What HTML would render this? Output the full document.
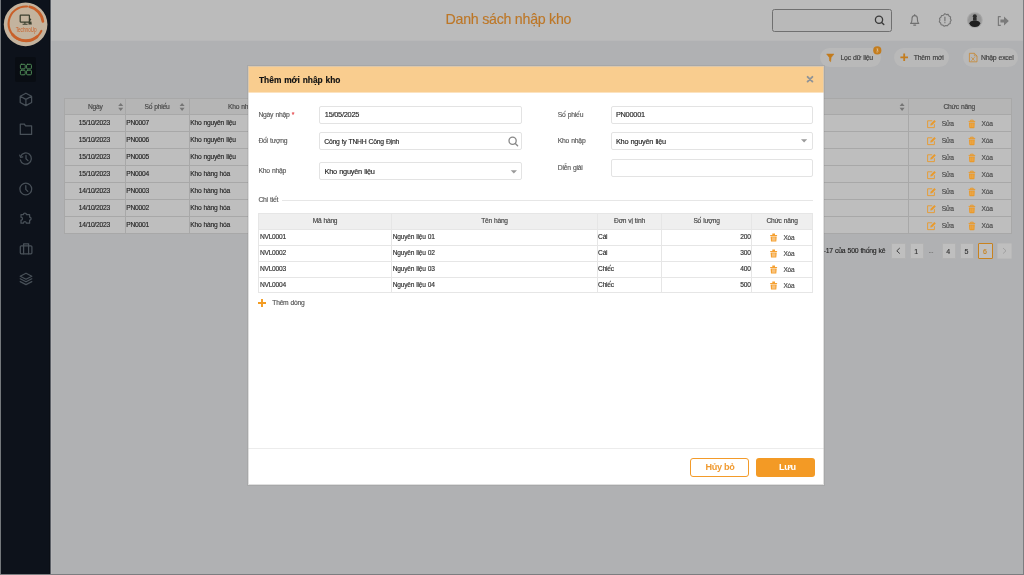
<!DOCTYPE html>
<html><head><meta charset="utf-8">
<style>
*{box-sizing:border-box;margin:0;padding:0}
html,body{width:1024px;height:575px;overflow:hidden;background:#b0b1b3;font-family:"Liberation Sans",sans-serif;color:#222}
#wrap{position:absolute;left:0;top:0;width:1024px;height:575px;overflow:hidden;background:#b0b1b3;will-change:transform}
.a{position:absolute}
.t{position:absolute;white-space:nowrap;line-height:1;-webkit-text-stroke:0.15px currentColor;word-spacing:0.5px}
svg{position:absolute;overflow:visible}
</style></head><body><div id="wrap">

<div class="a" style="left:1px;top:0px;width:49px;height:575px;background:#0d121b;"></div>
<div class="a" style="left:49px;top:0px;width:1px;height:575px;background:#0a0e15;"></div>
<div class="a" style="left:50px;top:0px;width:1px;height:575px;background:#5b5f66;"></div>
<div class="a" style="left:51px;top:0px;width:973px;height:40px;background:#bbbbbb;"></div>
<div class="a" style="left:51px;top:40px;width:973px;height:1px;background:#b8b8b9;"></div>
<div class="a" style="left:51px;top:0px;width:1px;height:575px;background:#c2c2c2;opacity:.3"></div>
<svg style="left:0;top:0" width="52" height="50" viewBox="0 0 52 50">
  <circle cx="25.6" cy="24.4" r="21.8" fill="#c3b39e"/>
  <g fill="none" stroke="#c8602a" stroke-linecap="round">
  <path d="M27 6.5 A17.2 17.2 0 1 0 41.4 30.9" stroke-width="2.1"/>
  <path d="M36.9 36.8 A17.5 17.5 0 0 1 12.6 34.6" stroke-width="2.9"/>
  <path d="M29.6 6.8 A17.2 17.2 0 0 1 42.9 21.4" stroke-width="2.7"/>
  </g>
  <rect x="20.2" y="15.2" width="9.2" height="6.8" rx="0.5" fill="none" stroke="#3b3f2f" stroke-width="1.25"/>
  <path d="M22.6 24.2 h5 M24.9 22 v2.2" stroke="#3b3f2f" stroke-width="1.1"/>
  <circle cx="30.1" cy="19.6" r="1.15" fill="#3b3f2f"/>
  <path d="M28.4 24.6 L28.8 21.6 H31.4 L31.8 24.6Z" fill="#3b3f2f"/>
  <text x="26.2" y="31.6" font-family="Liberation Sans" font-size="6.4" fill="#c8602a" text-anchor="middle" textLength="21" lengthAdjust="spacingAndGlyphs">TechnoUp</text>
</svg>
<div class="a" style="left:15px;top:57px;width:21px;height:25px;background:#090d13;border-radius:2px"></div>
<svg style="left:0;top:0" width="52" height="300" viewBox="0 0 52 300" fill="none" stroke-width="1" stroke-linecap="round" stroke-linejoin="round">
  <g stroke="#4f8b57">
    <rect x="20.4" y="64.3" width="4.8" height="4.6" rx="1"/>
    <rect x="26.6" y="64.3" width="4.8" height="4.6" rx="1"/>
    <rect x="20.4" y="70.2" width="4.8" height="4.6" rx="1"/>
    <rect x="26.6" y="70.2" width="4.8" height="4.6" rx="1"/>
  </g>
  <g stroke="#485058" stroke-width="1.25">
    <path d="M25.9 93.2 L31.6 96.3 V102.5 L25.9 105.6 L20.2 102.5 V96.3 Z M20.2 96.3 L25.9 99.4 L31.6 96.3 M25.9 99.4 V105.6"/>
    <path d="M20.3 124 H24.2 L25.6 125.8 H31.6 V134.4 H20.3 Z"/>
    <path d="M20.6 156.4 A5.6 5.6 0 1 1 20.3 159.8"/>
    <path d="M19.8 155.2 L20.6 157.4 L22.8 156.8"/>
    <path d="M26 155.4 V158.8 L28 160.6"/>
    <circle cx="25.8" cy="189" r="5.9"/>
    <path d="M25.8 185.6 V189.4 L27.8 191.4"/>
    <path d="M21 214.6 H23.4 A1.5 1.5 0 0 1 26.4 214.6 H29.6 V217.2 A1.5 1.5 0 0 1 29.6 220.2 V223.2 H26.4 A1.5 1.5 0 0 0 23.4 223.2 H21 V220.2 A1.5 1.5 0 0 0 21 217.2 Z"/>
    <rect x="20.3" y="245.8" width="11.6" height="8" rx="1"/>
    <path d="M23.6 245.8 V243.8 H28.6 V245.8 M23.6 245.8 V253.8 M28.6 245.8 V253.8"/>
    <path d="M26 273.2 L31.8 276.2 L26 279.2 L20.2 276.2 Z"/>
    <path d="M20.2 278.8 L26 281.8 L31.8 278.8"/>
    <path d="M20.2 281.6 L26 284.6 L31.8 281.6"/>
  </g>
</svg>
<div class="t " style="left:445.6px;top:12px;font-size:14.20px;letter-spacing:-0.035em;color:#bd7727;letter-spacing:-0.25px;word-spacing:0">Danh sách nhập kho</div>
<div class="a" style="left:772px;top:9px;width:120px;height:23px;background:#b9b9b9;border:1px solid #707070;border-radius:2.5px"></div>
<svg style="left:0;top:0" width="1024" height="41" viewBox="0 0 1024 41" fill="none">
  <circle cx="879" cy="19.8" r="3.6" stroke="#3a3a3a" stroke-width="1.3"/>
  <path d="M881.6 22.4 L883.8 24.6" stroke="#3a3a3a" stroke-width="1.4" stroke-linecap="round"/>
  <path d="M910.6 23.4 Q912 22.2 912 19.6 V18.6 A2.7 3 0 0 1 917.4 18.6 V19.6 Q917.4 22.2 918.8 23.4 Z" stroke="#707070" stroke-width="1.1" stroke-linejoin="round"/>
  <path d="M914.7 14.5 V15.5 M913.7 25.1 H915.7" stroke="#707070" stroke-width="1.1" stroke-linecap="round"/>
  <path d="M944.9 13.6 L946.4 14.6 L948.2 14.4 L949 16 L950.6 16.9 L950.4 18.7 L951.2 20.2 L950.2 21.7 L950.2 23.5 L948.5 24.2 L947.5 25.7 L945.7 25.5 L944.2 26.3 L942.9 25.1 L941.1 24.7 L940.6 23 L939.3 21.8 L939.9 20.1 L939.5 18.4 L940.9 17.3 L941.5 15.6 L943.3 15.3 Z" stroke="#747474" stroke-width="1.1" stroke-linejoin="round"/>
  <path d="M944.9 17 V20.8" stroke="#747474" stroke-width="1.2" stroke-linecap="round"/>
  <circle cx="944.9" cy="22.7" r="0.65" fill="#747474"/>
  <circle cx="974.8" cy="20.1" r="7.9" fill="#a6a6a6"/>
  <circle cx="974.8" cy="20.1" r="6.8" fill="#979797"/>
  <path d="M969.4 23.2 Q970.2 20.6 974.8 20.6 Q979.4 20.6 980.2 23.2 Q979.6 26.8 974.8 27 Q970 26.8 969.4 23.2Z" fill="#1e1e1e"/>
  <circle cx="974.8" cy="16.2" r="2" fill="#2c2c2c"/>
  <path d="M973 17.6 h3.6 v3 h-3.6z" fill="#2c2c2c"/>
  <path d="M1000.8 16.6 H998.4 V25.4 H1000.8" stroke="#7a7a7a" stroke-width="1.2" stroke-linejoin="round"/>
  <path d="M1000.4 19.4 H1004 V16.6 L1008.8 21 L1004 25.4 V22.6 H1000.4 Z" fill="#7a7a7a"/>
</svg>
<div class="a" style="left:819.5px;top:48px;width:61px;height:19px;background:#b9b9b9;border-radius:10px"></div>
<div class="a" style="left:894px;top:48px;width:55px;height:19px;background:#b9b9b9;border-radius:10px"></div>
<div class="a" style="left:963px;top:48px;width:55px;height:19px;background:#b9b9b9;border-radius:10px"></div>
<svg style="left:0;top:0" width="1024" height="70" viewBox="0 0 1024 70" fill="none">
  <path d="M826.6 54 H834 L831.2 57.4 L830.6 61.8 L829.6 61 L829.3 57.4 Z" fill="#c27b1c" stroke="#c27b1c" stroke-width="0.5" stroke-linejoin="round"/>
  <circle cx="877.3" cy="50.4" r="4.1" fill="#c47d1e"/>
  <path d="M876.4 48.9 H878.1 L877 50.3 Q878.4 50.4 878.2 51.4 Q877.9 52.3 876.3 51.9" stroke="#e8d6bd" stroke-width="0.6" fill="none"/>
  <path d="M900.4 57.3 H908 M904.2 53.5 V61.1" stroke="#c47d1e" stroke-width="1.8"/>
  <path d="M969.4 53.3 H974.4 L977 55.9 V61.8 H969.4 Z" stroke="#c8862e" stroke-width="0.8"/>
  <path d="M974.4 53.3 V55.9 H977" stroke="#c8862e" stroke-width="0.6"/>
  <path d="M971.4 57.2 L974.6 60.8 M974.6 57.2 L971.4 60.8" stroke="#c8862e" stroke-width="0.7"/>
</svg>
<div class="t " style="left:840.5px;top:55px;font-size:6.90px;letter-spacing:-0.035em;color:#3c3c3c;">Lọc dữ liệu</div>
<div class="t " style="left:913.8px;top:55px;font-size:6.85px;letter-spacing:-0.035em;color:#3c3c3c;">Thêm mới</div>
<div class="t " style="left:980.9px;top:55px;font-size:6.90px;letter-spacing:-0.035em;color:#3c3c3c;">Nhập excel</div>
<div class="a" style="left:64px;top:98px;width:948px;height:136px;background:#bebebe;"></div>
<div class="a" style="left:64px;top:98px;width:948px;height:16px;background:#b5b5b5;"></div>
<div class="a" style="left:64px;top:98px;width:948px;height:1px;background:#a8a8a8;"></div>
<div class="a" style="left:64px;top:114px;width:948px;height:1px;background:#a8a8a8;"></div>
<div class="a" style="left:64px;top:131px;width:948px;height:1px;background:#a8a8a8;"></div>
<div class="a" style="left:64px;top:148px;width:948px;height:1px;background:#a8a8a8;"></div>
<div class="a" style="left:64px;top:165px;width:948px;height:1px;background:#a8a8a8;"></div>
<div class="a" style="left:64px;top:182px;width:948px;height:1px;background:#a8a8a8;"></div>
<div class="a" style="left:64px;top:199px;width:948px;height:1px;background:#a8a8a8;"></div>
<div class="a" style="left:64px;top:216px;width:948px;height:1px;background:#a8a8a8;"></div>
<div class="a" style="left:64px;top:233px;width:948px;height:1px;background:#a8a8a8;"></div>
<div class="a" style="left:64px;top:98px;width:1px;height:136px;background:#a8a8a8;"></div>
<div class="a" style="left:125px;top:98px;width:1px;height:136px;background:#a8a8a8;"></div>
<div class="a" style="left:189px;top:98px;width:1px;height:136px;background:#a8a8a8;"></div>
<div class="a" style="left:908px;top:98px;width:1px;height:136px;background:#a8a8a8;"></div>
<div class="a" style="left:1011px;top:98px;width:1px;height:136px;background:#a8a8a8;"></div>
<div class="t " style="left:88px;top:104px;font-size:6.69px;letter-spacing:-0.035em;color:#454545;">Ngày</div>
<div class="t " style="left:144.5px;top:104px;font-size:6.69px;letter-spacing:-0.035em;color:#454545;">Số phiếu</div>
<div class="t " style="left:228px;top:104px;font-size:6.69px;letter-spacing:-0.035em;color:#454545;">Kho nhập</div>
<div class="t " style="left:943.5px;top:104px;font-size:6.69px;letter-spacing:-0.035em;color:#454545;">Chức năng</div>
<svg style="left:0;top:0" width="1024" height="120" viewBox="0 0 1024 120"><g fill="#767676">
<path d="M118.2 106 L120.7 102.9 L123.2 106Z M118.2 107.8 L120.7 110.9 L123.2 107.8Z"/>
<path d="M179.6 106 L182.1 102.9 L184.6 106Z M179.6 107.8 L182.1 110.9 L184.6 107.8Z"/>
<path d="M899.6 106 L902.1 102.9 L904.6 106Z M899.6 107.8 L902.1 110.9 L904.6 107.8Z"/>
</g></svg>
<div class="t " style="left:78.8px;top:120px;font-size:6.69px;letter-spacing:-0.035em;color:#262626;">15/10/2023</div>
<div class="t " style="left:126.3px;top:120px;font-size:6.69px;letter-spacing:-0.035em;color:#262626;">PN0007</div>
<div class="t " style="left:190.2px;top:120px;font-size:6.69px;letter-spacing:-0.035em;color:#262626;">Kho nguyên liệu</div>
<div class="t " style="left:941.8px;top:121px;font-size:6.69px;letter-spacing:-0.035em;color:#4a4a4a;">Sửa</div>
<div class="t " style="left:981.5px;top:121px;font-size:6.69px;letter-spacing:-0.035em;color:#4a4a4a;">Xóa</div>
<div class="t " style="left:78.8px;top:137px;font-size:6.69px;letter-spacing:-0.035em;color:#262626;">15/10/2023</div>
<div class="t " style="left:126.3px;top:137px;font-size:6.69px;letter-spacing:-0.035em;color:#262626;">PN0006</div>
<div class="t " style="left:190.2px;top:137px;font-size:6.69px;letter-spacing:-0.035em;color:#262626;">Kho nguyên liệu</div>
<div class="t " style="left:941.8px;top:138px;font-size:6.69px;letter-spacing:-0.035em;color:#4a4a4a;">Sửa</div>
<div class="t " style="left:981.5px;top:138px;font-size:6.69px;letter-spacing:-0.035em;color:#4a4a4a;">Xóa</div>
<div class="t " style="left:78.8px;top:154px;font-size:6.69px;letter-spacing:-0.035em;color:#262626;">15/10/2023</div>
<div class="t " style="left:126.3px;top:154px;font-size:6.69px;letter-spacing:-0.035em;color:#262626;">PN0005</div>
<div class="t " style="left:190.2px;top:154px;font-size:6.69px;letter-spacing:-0.035em;color:#262626;">Kho nguyên liệu</div>
<div class="t " style="left:941.8px;top:155px;font-size:6.69px;letter-spacing:-0.035em;color:#4a4a4a;">Sửa</div>
<div class="t " style="left:981.5px;top:155px;font-size:6.69px;letter-spacing:-0.035em;color:#4a4a4a;">Xóa</div>
<div class="t " style="left:78.8px;top:171px;font-size:6.69px;letter-spacing:-0.035em;color:#262626;">15/10/2023</div>
<div class="t " style="left:126.3px;top:171px;font-size:6.69px;letter-spacing:-0.035em;color:#262626;">PN0004</div>
<div class="t " style="left:190.2px;top:171px;font-size:6.69px;letter-spacing:-0.035em;color:#262626;">Kho hàng hóa</div>
<div class="t " style="left:941.8px;top:172px;font-size:6.69px;letter-spacing:-0.035em;color:#4a4a4a;">Sửa</div>
<div class="t " style="left:981.5px;top:172px;font-size:6.69px;letter-spacing:-0.035em;color:#4a4a4a;">Xóa</div>
<div class="t " style="left:78.8px;top:188px;font-size:6.69px;letter-spacing:-0.035em;color:#262626;">14/10/2023</div>
<div class="t " style="left:126.3px;top:188px;font-size:6.69px;letter-spacing:-0.035em;color:#262626;">PN0003</div>
<div class="t " style="left:190.2px;top:188px;font-size:6.69px;letter-spacing:-0.035em;color:#262626;">Kho hàng hóa</div>
<div class="t " style="left:941.8px;top:189px;font-size:6.69px;letter-spacing:-0.035em;color:#4a4a4a;">Sửa</div>
<div class="t " style="left:981.5px;top:189px;font-size:6.69px;letter-spacing:-0.035em;color:#4a4a4a;">Xóa</div>
<div class="t " style="left:78.8px;top:205px;font-size:6.69px;letter-spacing:-0.035em;color:#262626;">14/10/2023</div>
<div class="t " style="left:126.3px;top:205px;font-size:6.69px;letter-spacing:-0.035em;color:#262626;">PN0002</div>
<div class="t " style="left:190.2px;top:205px;font-size:6.69px;letter-spacing:-0.035em;color:#262626;">Kho hàng hóa</div>
<div class="t " style="left:941.8px;top:206px;font-size:6.69px;letter-spacing:-0.035em;color:#4a4a4a;">Sửa</div>
<div class="t " style="left:981.5px;top:206px;font-size:6.69px;letter-spacing:-0.035em;color:#4a4a4a;">Xóa</div>
<div class="t " style="left:78.8px;top:222px;font-size:6.69px;letter-spacing:-0.035em;color:#262626;">14/10/2023</div>
<div class="t " style="left:126.3px;top:222px;font-size:6.69px;letter-spacing:-0.035em;color:#262626;">PN0001</div>
<div class="t " style="left:190.2px;top:222px;font-size:6.69px;letter-spacing:-0.035em;color:#262626;">Kho hàng hóa</div>
<div class="t " style="left:941.8px;top:223px;font-size:6.69px;letter-spacing:-0.035em;color:#4a4a4a;">Sửa</div>
<div class="t " style="left:981.5px;top:223px;font-size:6.69px;letter-spacing:-0.035em;color:#4a4a4a;">Xóa</div>
<svg style="left:0;top:0" width="1024" height="240" viewBox="0 0 1024 240" fill="none">
<path d="M932.2 120.8 H927.6 V127.6 H934.4 V124.2" stroke="#e99a2c" stroke-width="0.9"/>
<path d="M930.2 125.6 L930.6 123.8 L934.4 120.0 L935.8 121.4 L932 125.2 Z" fill="#e99a2c"/>
<path d="M968.6 121.4 H975.2 M970.6 121.2 V120.2 H973.2 V121.2" stroke="#e99a2c" stroke-width="1"/>
<path d="M969 122.4 H974.8 L974.5 127.4 Q974.4 128.2 973.6 128.2 H970.2 Q969.4 128.2 969.3 127.4 Z" fill="#e99a2c"/>
<path d="M970.9 123.4 V127.0 M972.9 123.4 V127.0" stroke="#f2c07a" stroke-width="0.5"/>
<path d="M932.2 137.8 H927.6 V144.6 H934.4 V141.2" stroke="#e99a2c" stroke-width="0.9"/>
<path d="M930.2 142.6 L930.6 140.8 L934.4 137.0 L935.8 138.4 L932 142.2 Z" fill="#e99a2c"/>
<path d="M968.6 138.4 H975.2 M970.6 138.2 V137.2 H973.2 V138.2" stroke="#e99a2c" stroke-width="1"/>
<path d="M969 139.4 H974.8 L974.5 144.4 Q974.4 145.2 973.6 145.2 H970.2 Q969.4 145.2 969.3 144.4 Z" fill="#e99a2c"/>
<path d="M970.9 140.4 V144.0 M972.9 140.4 V144.0" stroke="#f2c07a" stroke-width="0.5"/>
<path d="M932.2 154.8 H927.6 V161.6 H934.4 V158.2" stroke="#e99a2c" stroke-width="0.9"/>
<path d="M930.2 159.6 L930.6 157.8 L934.4 154.0 L935.8 155.4 L932 159.2 Z" fill="#e99a2c"/>
<path d="M968.6 155.4 H975.2 M970.6 155.2 V154.2 H973.2 V155.2" stroke="#e99a2c" stroke-width="1"/>
<path d="M969 156.4 H974.8 L974.5 161.4 Q974.4 162.2 973.6 162.2 H970.2 Q969.4 162.2 969.3 161.4 Z" fill="#e99a2c"/>
<path d="M970.9 157.4 V161.0 M972.9 157.4 V161.0" stroke="#f2c07a" stroke-width="0.5"/>
<path d="M932.2 171.8 H927.6 V178.6 H934.4 V175.2" stroke="#e99a2c" stroke-width="0.9"/>
<path d="M930.2 176.6 L930.6 174.8 L934.4 171.0 L935.8 172.4 L932 176.2 Z" fill="#e99a2c"/>
<path d="M968.6 172.4 H975.2 M970.6 172.2 V171.2 H973.2 V172.2" stroke="#e99a2c" stroke-width="1"/>
<path d="M969 173.4 H974.8 L974.5 178.4 Q974.4 179.2 973.6 179.2 H970.2 Q969.4 179.2 969.3 178.4 Z" fill="#e99a2c"/>
<path d="M970.9 174.4 V178.0 M972.9 174.4 V178.0" stroke="#f2c07a" stroke-width="0.5"/>
<path d="M932.2 188.8 H927.6 V195.6 H934.4 V192.2" stroke="#e99a2c" stroke-width="0.9"/>
<path d="M930.2 193.6 L930.6 191.8 L934.4 188.0 L935.8 189.4 L932 193.2 Z" fill="#e99a2c"/>
<path d="M968.6 189.4 H975.2 M970.6 189.2 V188.2 H973.2 V189.2" stroke="#e99a2c" stroke-width="1"/>
<path d="M969 190.4 H974.8 L974.5 195.4 Q974.4 196.2 973.6 196.2 H970.2 Q969.4 196.2 969.3 195.4 Z" fill="#e99a2c"/>
<path d="M970.9 191.4 V195.0 M972.9 191.4 V195.0" stroke="#f2c07a" stroke-width="0.5"/>
<path d="M932.2 205.8 H927.6 V212.6 H934.4 V209.2" stroke="#e99a2c" stroke-width="0.9"/>
<path d="M930.2 210.6 L930.6 208.8 L934.4 205.0 L935.8 206.4 L932 210.2 Z" fill="#e99a2c"/>
<path d="M968.6 206.4 H975.2 M970.6 206.2 V205.2 H973.2 V206.2" stroke="#e99a2c" stroke-width="1"/>
<path d="M969 207.4 H974.8 L974.5 212.4 Q974.4 213.2 973.6 213.2 H970.2 Q969.4 213.2 969.3 212.4 Z" fill="#e99a2c"/>
<path d="M970.9 208.4 V212.0 M972.9 208.4 V212.0" stroke="#f2c07a" stroke-width="0.5"/>
<path d="M932.2 222.8 H927.6 V229.6 H934.4 V226.2" stroke="#e99a2c" stroke-width="0.9"/>
<path d="M930.2 227.6 L930.6 225.8 L934.4 222.0 L935.8 223.4 L932 227.2 Z" fill="#e99a2c"/>
<path d="M968.6 223.4 H975.2 M970.6 223.2 V222.2 H973.2 V223.2" stroke="#e99a2c" stroke-width="1"/>
<path d="M969 224.4 H974.8 L974.5 229.4 Q974.4 230.2 973.6 230.2 H970.2 Q969.4 230.2 969.3 229.4 Z" fill="#e99a2c"/>
<path d="M970.9 225.4 V229.0 M972.9 225.4 V229.0" stroke="#f2c07a" stroke-width="0.5"/>
</svg>
<div class="t " style="left:820.2px;top:248px;font-size:6.85px;letter-spacing:-0.035em;color:#262626;">1-17 của 500 thống kê</div>
<div class="a" style="left:891.3px;top:243px;width:14.5px;height:15.5px;border:1px solid #b3b3b3;background:#bfbfbf;border-radius:1px"></div>
<div class="a" style="left:909.5px;top:243px;width:14.5px;height:15.5px;border:1px solid #b3b3b3;background:#bfbfbf;border-radius:1px"></div>
<div class="t " style="left:914.3px;top:248px;font-size:7.06px;letter-spacing:-0.035em;color:#333;">1</div>
<div class="a" style="left:941.5px;top:243px;width:14.5px;height:15.5px;border:1px solid #b3b3b3;background:#bfbfbf;border-radius:1px"></div>
<div class="t " style="left:946.3px;top:248px;font-size:7.06px;letter-spacing:-0.035em;color:#333;">4</div>
<div class="a" style="left:959.6px;top:243px;width:14.5px;height:15.5px;border:1px solid #b3b3b3;background:#bfbfbf;border-radius:1px"></div>
<div class="t " style="left:964.4px;top:248px;font-size:7.06px;letter-spacing:-0.035em;color:#333;">5</div>
<div class="a" style="left:978.3px;top:243px;width:14.5px;height:15.5px;border:1px solid #c8821e;background:#bfbfbf;border-radius:1px"></div>
<div class="t " style="left:983.0999999999999px;top:248px;font-size:7.06px;letter-spacing:-0.035em;color:#c8821e;">6</div>
<div class="a" style="left:997.2px;top:243px;width:14.5px;height:15.5px;border:1px solid #b9b9b9;background:#bfbfbf;border-radius:1px"></div>
<div class="t " style="left:928.5px;top:248px;font-size:6.69px;letter-spacing:-0.035em;color:#666;">...</div>
<svg style="left:0;top:0" width="1024" height="270" viewBox="0 0 1024 270" fill="none">
  <path d="M899.8 248 L896.8 250.8 L899.8 253.6" stroke="#333" stroke-width="0.9"/>
  <path d="M1003 248 L1006 250.8 L1003 253.6" stroke="#999" stroke-width="0.8"/>
</svg>
<div class="a" style="left:247px;top:65px;width:578px;height:421px;background:rgba(0,0,0,0.05)"></div>
<div class="a" id="modal" style="left:248px;top:66px;width:576px;height:419px;background:#fff;overflow:hidden">
<div class="a" style="left:0px;top:0px;width:576px;height:26px;background:#f9cd8f;"></div>
<div class="a" style="left:0px;top:26px;width:576px;height:1px;background:#fce3c0;"></div>
<div class="t " style="left:11px;top:10px;font-size:8.40px;letter-spacing:-0.035em;color:#121212;font-weight:bold;letter-spacing:0">Thêm mới nhập kho</div>
<svg style="left:0;top:0" width="576" height="30" viewBox="0 0 576 30"><path d="M559.6 10.8 L564.4 15.6 M564.4 10.8 L559.6 15.6" stroke="#8f9397" stroke-width="1.9" stroke-linecap="round"/></svg>
<div class="t " style="left:10.4px;top:46px;font-size:6.79px;letter-spacing:-0.035em;color:#595959;">Ngày nhập <span style="color:#e5484d">*</span></div>
<div class="a" style="left:71px;top:40px;width:203px;height:18px;background:#fff;border:1px solid #e3e3e3;border-radius:2px"></div>
<div class="t " style="left:76.80000000000001px;top:45px;font-size:7.38px;letter-spacing:-0.035em;color:#262626;">15/05/2025</div>
<div class="t " style="left:10.4px;top:72px;font-size:6.79px;letter-spacing:-0.035em;color:#595959;">Đối tượng</div>
<div class="a" style="left:71px;top:66px;width:203px;height:18px;background:#fff;border:1px solid #e3e3e3;border-radius:2px"></div>
<div class="t " style="left:76.30000000000001px;top:73px;font-size:6.79px;letter-spacing:-0.035em;color:#262626;">Công ty TNHH Công Định</div>
<div class="t " style="left:10.4px;top:102px;font-size:6.79px;letter-spacing:-0.035em;color:#595959;">Kho nhập</div>
<div class="a" style="left:71px;top:96px;width:203px;height:18px;background:#fff;border:1px solid #e3e3e3;border-radius:2px"></div>
<div class="t " style="left:76.60000000000002px;top:102px;font-size:7.38px;letter-spacing:-0.035em;color:#262626;">Kho nguyên liệu</div>
<div class="t " style="left:309.79999999999995px;top:46px;font-size:6.79px;letter-spacing:-0.035em;color:#595959;">Số phiếu</div>
<div class="a" style="left:363px;top:40px;width:202px;height:18px;background:#fff;border:1px solid #e3e3e3;border-radius:2px"></div>
<div class="t " style="left:367.9px;top:45px;font-size:7.38px;letter-spacing:-0.035em;color:#262626;">PN00001</div>
<div class="t " style="left:309.79999999999995px;top:72px;font-size:6.79px;letter-spacing:-0.035em;color:#595959;">Kho nhập</div>
<div class="a" style="left:363px;top:66px;width:202px;height:18px;background:#fff;border:1px solid #e3e3e3;border-radius:2px"></div>
<div class="t " style="left:367.9px;top:72px;font-size:7.38px;letter-spacing:-0.035em;color:#262626;">Kho nguyên liệu</div>
<div class="t " style="left:309.79999999999995px;top:99px;font-size:6.79px;letter-spacing:-0.035em;color:#595959;">Diễn giải</div>
<div class="a" style="left:363px;top:93px;width:202px;height:18px;background:#fff;border:1px solid #e3e3e3;border-radius:2px"></div>
<svg style="left:0;top:0" width="576" height="120" viewBox="0 0 576 120" fill="none">
  <circle cx="264.6" cy="74.80000000000001" r="3.6" stroke="#888" stroke-width="1.3"/>
  <path d="M267.29999999999995 77.5 L269.6 79.69999999999999" stroke="#888" stroke-width="1.4" stroke-linecap="round"/>
  <path d="M262.7 104.19999999999999 L265.85 107.4 L269 104.19999999999999Z" fill="#9a9a9a"/>
  <path d="M553 73.30000000000001 L556.1 76.6 L559.2 73.30000000000001Z" fill="#9a9a9a"/>
</svg>
<div class="t " style="left:10.4px;top:131px;font-size:6.79px;letter-spacing:-0.035em;color:#595959;">Chi tiết</div>
<div class="a" style="left:34px;top:134px;width:531px;height:1px;background:#e6e6e6;"></div>
<div class="a" style="left:10px;top:147px;width:555px;height:16px;background:#efefef;"></div>
<div class="a" style="left:10px;top:147px;width:555px;height:1px;background:#e6e6e6;"></div>
<div class="a" style="left:10px;top:163px;width:555px;height:1px;background:#e6e6e6;"></div>
<div class="a" style="left:10px;top:179px;width:555px;height:1px;background:#e6e6e6;"></div>
<div class="a" style="left:10px;top:195px;width:555px;height:1px;background:#e6e6e6;"></div>
<div class="a" style="left:10px;top:211px;width:555px;height:1px;background:#e6e6e6;"></div>
<div class="a" style="left:10px;top:226px;width:555px;height:1px;background:#e6e6e6;"></div>
<div class="a" style="left:10px;top:147px;width:1px;height:80px;background:#e6e6e6;"></div>
<div class="a" style="left:143px;top:147px;width:1px;height:80px;background:#e6e6e6;"></div>
<div class="a" style="left:349px;top:147px;width:1px;height:80px;background:#e6e6e6;"></div>
<div class="a" style="left:413px;top:147px;width:1px;height:80px;background:#e6e6e6;"></div>
<div class="a" style="left:503px;top:147px;width:1px;height:80px;background:#e6e6e6;"></div>
<div class="a" style="left:564px;top:147px;width:1px;height:80px;background:#e6e6e6;"></div>
<div class="t" style="left:11px;top:152px;width:132px;text-align:center;font-size:6.63px;letter-spacing:-0.035em;color:#444">Mã hàng</div>
<div class="t" style="left:144px;top:152px;width:205px;text-align:center;font-size:6.63px;letter-spacing:-0.035em;color:#444">Tên hàng</div>
<div class="t" style="left:350px;top:152px;width:63px;text-align:center;font-size:6.63px;letter-spacing:-0.035em;color:#444">Đơn vị tính</div>
<div class="t" style="left:414px;top:152px;width:89px;text-align:center;font-size:6.63px;letter-spacing:-0.035em;color:#444">Số lượng</div>
<div class="t" style="left:504px;top:152px;width:60px;text-align:center;font-size:6.63px;letter-spacing:-0.035em;color:#444">Chức năng</div>
<div class="t " style="left:11.899999999999977px;top:168px;font-size:6.63px;letter-spacing:-0.035em;color:#2e2e2e;">NVL0001</div>
<div class="t " style="left:144.8px;top:168px;font-size:6.63px;letter-spacing:-0.035em;color:#2e2e2e;">Nguyên liệu 01</div>
<div class="t " style="left:350.1px;top:168px;font-size:6.63px;letter-spacing:-0.035em;color:#2e2e2e;">Cái</div>
<div class="t" style="left:452px;top:168px;width:50.6px;text-align:right;font-size:6.63px;letter-spacing:-0.035em;color:#2e2e2e">200</div>
<div class="t " style="left:535.4px;top:169px;font-size:6.53px;letter-spacing:-0.035em;color:#444;">Xóa</div>
<div class="t " style="left:11.899999999999977px;top:184px;font-size:6.63px;letter-spacing:-0.035em;color:#2e2e2e;">NVL0002</div>
<div class="t " style="left:144.8px;top:184px;font-size:6.63px;letter-spacing:-0.035em;color:#2e2e2e;">Nguyên liệu 02</div>
<div class="t " style="left:350.1px;top:184px;font-size:6.63px;letter-spacing:-0.035em;color:#2e2e2e;">Cái</div>
<div class="t" style="left:452px;top:184px;width:50.6px;text-align:right;font-size:6.63px;letter-spacing:-0.035em;color:#2e2e2e">300</div>
<div class="t " style="left:535.4px;top:185px;font-size:6.53px;letter-spacing:-0.035em;color:#444;">Xóa</div>
<div class="t " style="left:11.899999999999977px;top:200px;font-size:6.63px;letter-spacing:-0.035em;color:#2e2e2e;">NVL0003</div>
<div class="t " style="left:144.8px;top:200px;font-size:6.63px;letter-spacing:-0.035em;color:#2e2e2e;">Nguyên liệu 03</div>
<div class="t " style="left:350.1px;top:200px;font-size:6.63px;letter-spacing:-0.035em;color:#2e2e2e;">Chiếc</div>
<div class="t" style="left:452px;top:200px;width:50.6px;text-align:right;font-size:6.63px;letter-spacing:-0.035em;color:#2e2e2e">400</div>
<div class="t " style="left:535.4px;top:201px;font-size:6.53px;letter-spacing:-0.035em;color:#444;">Xóa</div>
<div class="t " style="left:11.899999999999977px;top:216px;font-size:6.63px;letter-spacing:-0.035em;color:#2e2e2e;">NVL0004</div>
<div class="t " style="left:144.8px;top:216px;font-size:6.63px;letter-spacing:-0.035em;color:#2e2e2e;">Nguyên liệu 04</div>
<div class="t " style="left:350.1px;top:216px;font-size:6.63px;letter-spacing:-0.035em;color:#2e2e2e;">Chiếc</div>
<div class="t" style="left:452px;top:216px;width:50.6px;text-align:right;font-size:6.63px;letter-spacing:-0.035em;color:#2e2e2e">500</div>
<div class="t " style="left:535.4px;top:217px;font-size:6.53px;letter-spacing:-0.035em;color:#444;">Xóa</div>
<svg style="left:0;top:0" width="576" height="260" viewBox="0 0 576 260">
<path d="M522.2 169.1 H529.1 V170.1 H522.2Z M524.3 169.1 V167.6 H527 V169.1" fill="#f5a030"/>
<path d="M522.6 170.5 H528.7 L528.3 175.6 H523Z" fill="#f5a030"/>
<rect x="524" y="171.3" width="3.4" height="3.4" fill="#f8c27c"/>
<path d="M522.2 185.1 H529.1 V186.1 H522.2Z M524.3 185.1 V183.6 H527 V185.1" fill="#f5a030"/>
<path d="M522.6 186.5 H528.7 L528.3 191.6 H523Z" fill="#f5a030"/>
<rect x="524" y="187.3" width="3.4" height="3.4" fill="#f8c27c"/>
<path d="M522.2 201.1 H529.1 V202.1 H522.2Z M524.3 201.1 V199.6 H527 V201.1" fill="#f5a030"/>
<path d="M522.6 202.5 H528.7 L528.3 207.6 H523Z" fill="#f5a030"/>
<rect x="524" y="203.3" width="3.4" height="3.4" fill="#f8c27c"/>
<path d="M522.2 217.1 H529.1 V218.1 H522.2Z M524.3 217.1 V215.6 H527 V217.1" fill="#f5a030"/>
<path d="M522.6 218.5 H528.7 L528.3 223.6 H523Z" fill="#f5a030"/>
<rect x="524" y="219.3" width="3.4" height="3.4" fill="#f8c27c"/>
</svg>
<svg style="left:0;top:0" width="576" height="260" viewBox="0 0 576 260"><path d="M10 237 H18 M14 233 V241" stroke="#f39c22" stroke-width="1.9"/></svg>
<div class="t " style="left:24.30000000000001px;top:234px;font-size:6.69px;letter-spacing:-0.035em;color:#555;">Thêm dòng</div>
<div class="a" style="left:0px;top:382px;width:576px;height:1px;background:#ececec;"></div>
<div class="a" style="left:442px;top:392px;width:59px;height:19px;background:#fff;border:1px solid #f39b2a;border-radius:3px"></div>
<div class="t " style="left:457.6px;top:397px;font-size:9.10px;letter-spacing:-0.035em;color:#f09a30;font-weight:bold;letter-spacing:-0.3px;word-spacing:0;-webkit-text-stroke:0">Hủy bỏ</div>
<div class="a" style="left:508px;top:392px;width:59px;height:19px;background:#f39a25;border-radius:3px"></div>
<div class="t " style="left:530.9px;top:397px;font-size:9.10px;letter-spacing:-0.035em;color:#fff;font-weight:bold;letter-spacing:-0.3px;-webkit-text-stroke:0">Lưu</div>
<div class="a" style="left:0;top:0;width:576px;height:419px;border:1px solid rgba(196,196,196,0.55)"></div>
</div>
<div class="a" style="left:0px;top:0px;width:1px;height:575px;background:#74787c;"></div>
<div class="a" style="left:1023px;top:0px;width:1px;height:575px;background:#7c7d80;"></div>
<div class="a" style="left:0px;top:574px;width:1024px;height:1px;background:#7c7d80;"></div>
</div></body></html>
